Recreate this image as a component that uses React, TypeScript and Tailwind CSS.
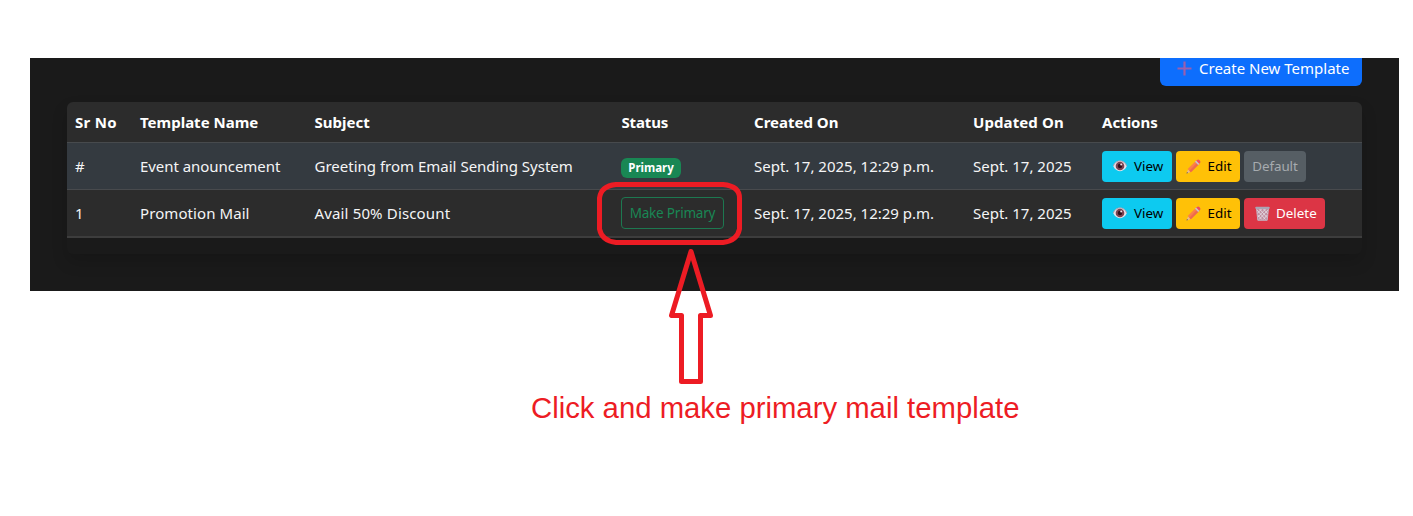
import type { ReactNode } from "react";

const columns =
  "grid grid-cols-[65px_174.5px_307px_132.5px_219px_129px_1fr] items-center whitespace-nowrap [&>*]:pl-2";

function PlusIcon() {
  return (
    <svg width="15" height="15" viewBox="0 0 15 15" fill="none">
      <path d="M7.5 0.5V14.5M0.5 7.5H14.5" stroke="#9a5fae" strokeWidth="2.2" />
    </svg>
  );
}

function EyeIcon() {
  return (
    <svg width="14" height="12" viewBox="0 0 14 12">
      <path d="M.2 6C1.400 2.600 4.200.8 7 .8S12.600 2.600 13.800 6C12.600 9.400 9.800 11.200 7 11.200S1.400 9.400.2 6Z" fill="#e6e0e8" />
      <path d="M.3 6C1.500 2.600 4.200.9 7 .9S12.500 2.600 13.700 6" fill="none" stroke="#a99aa8" strokeWidth=".9" />
      <circle cx="7" cy="6" r="4.300" fill="#7d4350" />
      <circle cx="7" cy="6" r="2.200" fill="#2d101c" />
      <circle cx="8.200" cy="4.400" r="1" fill="#f2dfe3" />
    </svg>
  );
}

function PencilIcon() {
  return (
    <svg width="15" height="15" viewBox="0 0 15 15">
      <path d="M.5 14.500 2 10.400 4.600 13Z" fill="#e9b893" />
      <path d="M.5 14.500 1 13 2 14Z" fill="#493f46" />
      <path d="M1.700 10.100 9.300 2.500 12.500 5.700 4.900 13.300Z" fill="#fb8048" />
      <path d="M3.300 11.700 10.900 4.100 12.500 5.700 4.900 13.300Z" fill="#ef6a4d" />
      <path d="M9 2.800 10.200 1.600 13.400 4.800 12.200 6Z" fill="#c7c0cf" />
      <path d="M10.200 1.600 11.100.9Q12.300.1 13.300 1.100L13.900 1.700Q14.900 2.800 14.100 3.900L13.400 4.800Z" fill="#ee4b62" />
    </svg>
  );
}

function TrashIcon() {
  return (
    <svg width="15" height="15" viewBox="0 0 15 15" fill="none">
      <path d="M1.500 2.500H13.500L12.200 14.300H2.800Z" fill="#c08fa0" />
      <path d="M2 4 10.500 13.500M4.500 3 12 11.500M8.500 3 13 8M2.800 9 6.800 13.500M13 4 4 13.500M10.500 3 3 11M6.500 3 2.300 7.500M12.300 9 8.300 13.500" stroke="#e7dfe9" strokeWidth=".8" />
      <path d="M1.500 2.500H13.500L12.200 14.300H2.800Z" stroke="#c3bac8" strokeWidth=".9" />
      <rect x=".5" y=".7" width="14" height="2.300" rx=".6" fill="#aaa5b3" />
    </svg>
  );
}

function ActionButton({ className, children }: { className: string; children: ReactNode }) {
  return (
    <button className={`flex h-[31px] shrink-0 items-center rounded text-[13.4px] ${className}`}>
      {children}
    </button>
  );
}

function ViewEdit() {
  return (
    <>
      <ActionButton className="w-[70.5px] gap-[7px] bg-[#0dcaf0] pl-[11.5px] text-black">
        <EyeIcon />
        <span>View</span>
      </ActionButton>
      <ActionButton className="w-16 gap-[6.500px] bg-[#ffc107] pl-[10px] text-black">
        <PencilIcon />
        <span>Edit</span>
      </ActionButton>
    </>
  );
}

export default function App() {
  return (
    <div className="relative h-[516px] w-[1413px] overflow-hidden bg-white pt-[58px] font-['Noto_Sans',sans-serif]">
      <main className="ml-[30px] h-[233px] w-[1369px] overflow-hidden bg-[#1a1a1a] pl-[37px] text-[15px] text-[#f4f5f6]">
        <div className="flex w-[1295px] justify-end">
          <button className="flex h-[28px] w-[202px] items-center gap-[7px] rounded-b-md bg-[#0d6efd] pb-[7px] pl-[17px] whitespace-nowrap text-white">
            <PlusIcon />
            <span>Create New Template</span>
          </button>
        </div>
        <section className="mt-4 h-[152px] w-[1295px] overflow-hidden rounded-md shadow-[0_8px_16px_rgba(0,0,0,0.15)]">
          <div className={`${columns} h-[41px] border-b border-[#474a4d] bg-[#2c2c2c] font-bold text-white`}>
            <span className="tracking-[0.3px]">Sr No</span>
            <span>Template Name</span>
            <span>Subject</span>
            <span className="tracking-[-0.15px]">Status</span>
            <span>Created On</span>
            <span className="tracking-[0.1px]">Updated On</span>
            <span>Actions</span>
          </div>
          <div className={`${columns} h-[47px] border-b border-[#484a4d] bg-[#343a40]`}>
            <span>#</span>
            <span className="tracking-[-0.05px]">Event anouncement</span>
            <span>Greeting from Email Sending System</span>
            <div>
              <span className="mt-[3px] -ml-[0.5px] flex h-5 w-[60px] items-center justify-center rounded-md bg-[#198754] text-[11.5px] font-bold text-white">
                Primary
              </span>
            </div>
            <span>Sept. 17, 2025, 12:29 p.m.</span>
            <span>Sept. 17, 2025</span>
            <div className="-ml-[0.5px] flex gap-1">
              <ViewEdit />
              <ActionButton className="w-[62px] justify-center bg-[#565e64] text-[#a6abaf]">
                <span className="tracking-[-0.1px]">Default</span>
              </ActionButton>
            </div>
          </div>
          <div className={`${columns} h-12 border-b-2 border-[#3d3d3d] bg-[#2c2c2c]`}>
            <span>1</span>
            <span className="tracking-[0.08px]">Promotion Mail</span>
            <span className="tracking-[0.15px]">Avail 50% Discount</span>
            <div className="-ml-[0.5px]">
              <button className="flex h-8 w-[103px] items-center justify-center rounded border border-[#1d7850] text-[13.5px] tracking-[-0.2px] text-[#198754]">
                Make Primary
              </button>
            </div>
            <span>Sept. 17, 2025, 12:29 p.m.</span>
            <span>Sept. 17, 2025</span>
            <div className="-ml-[0.5px] flex gap-1">
              <ViewEdit />
              <ActionButton className="w-[81px] gap-[6px] bg-[#dc3545] pl-[11px] text-white">
                <TrashIcon />
                <span>Delete</span>
              </ActionButton>
            </div>
          </div>
        </section>
      </main>
      <p className="mt-[100px] ml-[531px] w-fit font-['Liberation_Sans',Arial,sans-serif] text-[29.3px] leading-[34px] whitespace-nowrap text-[#ed1c24]">
        Click and make primary mail template
      </p>
      <svg className="pointer-events-none absolute top-[180px] left-[590px]" width="160" height="210" viewBox="590 180 160 210" fill="none" stroke="#ed1c24" strokeWidth="5" strokeLinejoin="round">
        <path d="M616 184.500H723Q739.500 186 739.500 198V229Q737 241 723 242.500H616Q602 241 599.500 229V198Q601 186 616 184.500Z" />
        <path d="M691 251.500 671.500 315.500H681.500V381.500H700.500V315.500H710.500Z" />
      </svg>
    </div>
  );
}
